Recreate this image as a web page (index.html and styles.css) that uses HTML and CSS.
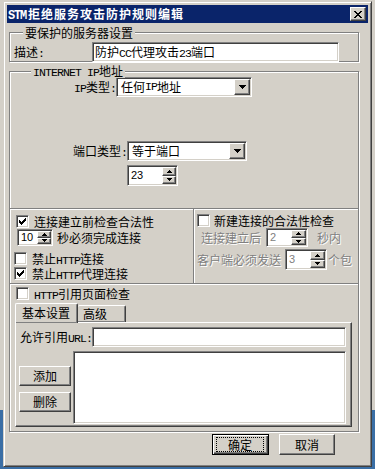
FILE: index.html
```html
<!DOCTYPE html>
<html>
<head>
<meta charset="utf-8">
<title>STM拒绝服务攻击防护规则编辑</title>
<link rel="stylesheet" href="styles.css">
</head>
<body>
<div class="dlg">
  <div class="title">
    <span class="ttext"><span class="tm">STM</span>拒绝服务攻击防护规则编辑</span>
    <span class="close"><svg width="8" height="7" viewBox="0 0 8 7" shape-rendering="crispEdges"><path d="M0 0h2v1h-2zM6 0h2v1h-2zM1 1h2v1h-2zM5 1h2v1h-2zM2 2h4v1h-4zM3 3h2v1h-2zM2 4h4v1h-4zM1 5h2v1h-2zM5 5h2v1h-2zM0 6h2v1h-2zM6 6h2v1h-2z"/></svg></span>
  </div>
  <div class="client">
    <div class="frame fa">
      <div class="legend la">要保护的服务器设置</div>
      <div class="ra">
        <span class="lbl-desc">描述<span class="m">:</span></span>
        <div class="field desc">防护<span class="m">CC</span>代理攻击<span class="m">23</span>端口</div>
      </div>
    </div>

    <div class="frame fb">
      <div class="legend lb"><span class="m">INTERNET IP</span>地址</div>
      <div class="r-ip">
        <span class="rl rl-ip"><span class="m">IP</span>类型<span class="m">:</span></span>
        <div class="combo combo-ip">
          <span class="ctext">任何<span class="m">IP</span>地址</span>
          <span class="drop"><svg width="7" height="4" viewBox="0 0 7 4" shape-rendering="crispEdges"><path d="M0 0h7v1h-1v1h-1v1h-1v1h-1v-1h-1v-1h-1v-1h-1z"/></svg></span>
        </div>
      </div>
      <div class="r-port">
        <span class="rl rl-port">端口类型<span class="m">:</span></span>
        <div class="combo combo-port">
          <span class="ctext">等于端口</span>
          <span class="drop"><svg width="7" height="4" viewBox="0 0 7 4" shape-rendering="crispEdges"><path d="M0 0h7v1h-1v1h-1v1h-1v1h-1v-1h-1v-1h-1v-1h-1z"/></svg></span>
        </div>
      </div>
      <div class="spin spin-port">
        <span class="v">23</span>
        <span class="arr">
          <span class="ab"><svg width="5" height="3" viewBox="0 0 5 3" shape-rendering="crispEdges"><path d="M2 0h1v1h1v1h1v1h-5v-1h1v-1h1z"/></svg></span>
          <span class="ab"><svg width="5" height="3" viewBox="0 0 5 3" shape-rendering="crispEdges"><path d="M0 0h5v1h-1v1h-1v1h-1v-1h-1v-1h-1z"/></svg></span>
        </span>
      </div>
    </div>

    <div class="crow">
      <div class="frame fcl">
        <div class="chk c1">
          <span class="cb"><svg width="7" height="7" viewBox="0 0 7 7" shape-rendering="crispEdges"><path d="M6 0h1v1h-1zM5 1h2v1h-2zM0 2h1v1h-1zM4 2h3v1h-3zM0 3h2v1h-2zM3 3h3v1h-3zM0 4h5v1h-5zM1 5h3v1h-3zM2 6h1v1h-1z"/></svg></span>
          <span class="ct">连接建立前检查合法性</span>
        </div>
        <div class="srow s1">
          <div class="spin spin-10">
            <span class="v">10</span>
            <span class="arr">
              <span class="ab"><svg width="5" height="3" viewBox="0 0 5 3" shape-rendering="crispEdges"><path d="M2 0h1v1h1v1h1v1h-5v-1h1v-1h1z"/></svg></span>
              <span class="ab"><svg width="5" height="3" viewBox="0 0 5 3" shape-rendering="crispEdges"><path d="M0 0h5v1h-1v1h-1v1h-1v-1h-1v-1h-1z"/></svg></span>
            </span>
          </div>
          <span>秒必须完成连接</span>
        </div>
        <div class="chk c2">
          <span class="cb"></span>
          <span class="ct">禁止<span class="m">HTTP</span>连接</span>
        </div>
        <div class="chk c3">
          <span class="cb"><svg width="7" height="7" viewBox="0 0 7 7" shape-rendering="crispEdges"><path d="M6 0h1v1h-1zM5 1h2v1h-2zM0 2h1v1h-1zM4 2h3v1h-3zM0 3h2v1h-2zM3 3h3v1h-3zM0 4h5v1h-5zM1 5h3v1h-3zM2 6h1v1h-1z"/></svg></span>
          <span class="ct">禁止<span class="m">HTTP</span>代理连接</span>
        </div>
      </div>
      <div class="frame fcr">
        <div class="chk r1">
          <span class="cb"></span>
          <span class="ct">新建连接的合法性检查</span>
        </div>
        <div class="srow r2">
          <span class="dis">连接建立后</span>
          <div class="spin spin-2">
            <span class="v dv">2</span>
            <span class="arr">
              <span class="ab"><svg width="5" height="3" viewBox="0 0 5 3" shape-rendering="crispEdges"><path d="M2 0h1v1h1v1h1v1h-5v-1h1v-1h1z"/></svg></span>
              <span class="ab"><svg width="5" height="3" viewBox="0 0 5 3" shape-rendering="crispEdges"><path d="M0 0h5v1h-1v1h-1v1h-1v-1h-1v-1h-1z"/></svg></span>
            </span>
          </div>
          <span class="dis after2">秒内</span>
        </div>
        <div class="srow r3">
          <span class="dis">客户端必须发送</span>
          <div class="spin spin-3">
            <span class="v dv">3</span>
            <span class="arr">
              <span class="ab"><svg width="5" height="3" viewBox="0 0 5 3" shape-rendering="crispEdges"><path d="M2 0h1v1h1v1h1v1h-5v-1h1v-1h1z"/></svg></span>
              <span class="ab"><svg width="5" height="3" viewBox="0 0 5 3" shape-rendering="crispEdges"><path d="M0 0h5v1h-1v1h-1v1h-1v-1h-1v-1h-1z"/></svg></span>
            </span>
          </div>
          <span class="dis after3">个包</span>
        </div>
      </div>
    </div>

    <div class="frame fd">
      <div class="chk d1">
        <span class="cb"></span>
        <span class="ct"><span class="m">HTTP</span>引用页面检查</span>
      </div>
      <div class="tabs">
        <span class="tab tab-on">基本设置</span>
        <span class="tab tab-off">高级</span>
      </div>
      <div class="pane">
        <div class="urow">
          <span class="ulbl">允许引用<span class="m">URL:</span></span>
          <div class="field url"></div>
        </div>
        <div class="prow">
          <div class="bcol">
            <span class="btn sb b-add">添加</span>
            <span class="btn sb b-del">删除</span>
          </div>
          <div class="field list"></div>
        </div>
      </div>
    </div>

    <div class="btns">
      <span class="btn def ok"><span class="focus">确定</span></span>
      <span class="btn cancel">取消</span>
    </div>
  </div>
</div>
</body>
</html>
```
FILE: styles.css
```css
* { box-sizing: border-box; }
html, body { margin: 0; padding: 0; }
body {
  width: 375px;
  height: 469px;
  overflow: hidden;
  background: linear-gradient(#d4d0c8 0, #d4d0c8 410px, #3a6ea5 410px);
  font: 12px/14px "Noto Sans CJK SC", sans-serif;
  color: #000;
}
.m {
  font-family: "Liberation Mono", monospace;
  font-size: 11.5px;
  letter-spacing: -0.9px;
  line-height: 10px;
}

.dlg {
  margin: 1px 0 0 3px;
  width: 369px;
  height: 466px;
  background: #d4d0c8;
  border: 1px solid;
  border-color: #d4d0c8 #404040 #404040 #d4d0c8;
  box-shadow: inset 1px 1px 0 #fff, inset -1px -1px 0 #808080;
  padding: 3px;
  display: flex;
  flex-direction: column;
}
.title {
  height: 18px;
  flex: none;
  background: #0a246a;
  color: #fff;
  font-weight: bold;
  display: flex;
  align-items: center;
  justify-content: space-between;
  padding: 0 2px 0 1px;
}
.ttext { letter-spacing: 1px; white-space: nowrap; }
.tm {
  font: bold 12px/10px "Liberation Mono", monospace;
  letter-spacing: -1.2px;
  margin-right: 2px;
}
.close {
  width: 16px; height: 14px;
  background: #d4d0c8;
  border: 1px solid;
  border-color: #fff #404040 #404040 #fff;
  box-shadow: inset -1px -1px 0 #808080;
  display: flex; align-items: center; justify-content: center;
}

.client { padding-left: 2px; }

.frame {
  position: relative;
  width: 350px;
  border: 1px solid #808080;
  box-shadow: 1px 1px 0 #fff, inset 1px 1px 0 #fff;
}
.legend {
  position: absolute;
  background: #d4d0c8;
  padding: 0 2px;
  line-height: 14px;
  white-space: nowrap;
}
.fa { margin-top: 9px; height: 30px; }
.la { top: -7px; left: 13px; }
.ra { display: flex; align-items: center; margin-top: 9px; padding-left: 4px; height: 20px; }
.lbl-desc { width: 78px; }

.field {
  background: #fff;
  border: 1px solid;
  border-color: #808080 #fff #fff #808080;
  box-shadow: inset 1px 1px 0 #404040, inset -1px -1px 0 #d4d0c8;
}
.desc { width: 247px; height: 20px; padding: 2px 0 0 2px; white-space: nowrap; }

.fb { margin-top: 9px; height: 138px; }
.lb { top: -8px; left: 21px; }
.r-ip, .r-port { display: flex; align-items: center; height: 20px; }
.r-ip { margin-top: 5px; }
.r-port { margin-top: 44px; }
.rl { text-align: right; white-space: nowrap; }
.rl-ip { width: 106px; }
.rl-port { width: 117px; }

.combo {
  height: 20px;
  display: flex;
  align-items: stretch;
  background: #fff;
  border: 1px solid;
  border-color: #808080 #fff #fff #808080;
  box-shadow: inset 1px 1px 0 #404040, inset -1px -1px 0 #d4d0c8;
  padding: 1px;
}
.combo-ip { width: 136px; }
.combo-port { width: 120px; }
.ctext { flex: 1; padding-left: 3px; display: flex; align-items: center; white-space: nowrap; }
.drop, .ab, .btn, .tab {
  background: #d4d0c8;
  border: 1px solid;
  border-color: #fff #404040 #404040 #fff;
  box-shadow: inset -1px -1px 0 #808080;
}
.drop { width: 16px; display: flex; align-items: center; justify-content: center; }

.spin {
  display: flex;
  background: #fff;
  border: 1px solid;
  border-color: #808080 #fff #fff #808080;
  box-shadow: inset 1px 1px 0 #404040, inset -1px -1px 0 #d4d0c8;
  padding: 1px;
}
.spin .v {
  flex: 1;
  padding-left: 2px;
  font: 11px/13px "Liberation Sans", sans-serif;
  display: flex; align-items: center;
}
.spin .dv { color: #808080; }
.arr { width: 14px; display: flex; flex-direction: column; }
.ab { flex: 1; display: flex; align-items: center; justify-content: center; }
.spin-port { width: 51px; height: 21px; margin: 4px 0 0 117px; }
.spin-10 { width: 36px; height: 17px; }
.spin-2 { width: 42px; height: 19px; margin-left: 5px; }
.spin-3 { width: 42px; height: 21px; margin-left: 4px; }
.spin-2 .arr, .spin-3 .arr { width: 15px; }

.crow { display: flex; margin-top: -1px; }
.fcl { width: 185px; height: 76px; }
.fcr { width: 166px; height: 76px; margin-left: -1px; }

.chk { display: flex; align-items: center; height: 13px; gap: 5px; white-space: nowrap; }
.ct { line-height: 13px; height: 13px; display: block; }
.cb {
  width: 13px; height: 13px; flex: none;
  background: #fff;
  border: 1px solid;
  border-color: #808080 #fff #fff #808080;
  box-shadow: inset 1px 1px 0 #404040, inset -1px -1px 0 #d4d0c8;
  display: flex; align-items: center; justify-content: center;
}
.c1 { margin: 6px 0 0 6px; }
.srow { display: flex; align-items: center; white-space: nowrap; }
.s1 { margin: 1px 0 0 7px; gap: 4px; }
.c2 { margin: 6px 0 0 4px; }
.c3 { margin: 2px 0 0 4px; }

.r1 { margin: 5px 0 0 3px; gap: 4px; }
.r2 { margin: 1px 0 0 7px; }
.r3 { margin: 2px 0 0 3px; }
.dis { color: #808080; text-shadow: 1px 1px 0 #fff; }
.after2 { margin-left: 9px; }
.after3 { margin-left: 1px; }

.fd { margin-top: -1px; height: 149px; }
.d1 { margin: 3px 0 0 6px; }
.tabs {
  position: relative;
  z-index: 1;
  display: flex;
  align-items: flex-end;
  height: 19px;
  margin: 3px 0 0 5px;
}
.tab {
  display: flex; align-items: center;
  border-bottom: none;
  border-radius: 2px 2px 0 0;
  white-space: nowrap;
}
.tab-on { width: 63px; height: 20px; margin-bottom: -1px; padding: 0 0 1px 6px; }
.tab-off { width: 48px; height: 17px; border-left: none; padding: 0 0 0 5px; }
.pane {
  width: 337px;
  height: 105px;
  margin-left: 5px;
  border: 1px solid;
  border-color: #fff #404040 #404040 #fff;
  box-shadow: inset -1px -1px 0 #808080;
}
.urow { display: flex; align-items: center; margin: 4px 0 0 4px; height: 20px; }
.ulbl { width: 72px; white-space: nowrap; }
.url { width: 254px; height: 20px; }
.prow { display: flex; margin-top: 4px; }
.bcol { display: flex; flex-direction: column; width: 52px; margin-left: 3px; }
.sb { width: 52px; height: 20px; }
.b-add { margin-top: 15px; }
.b-del { margin-top: 6px; }
.list { width: 273px; height: 73px; margin-left: 2px; }

.btn { display: flex; align-items: center; justify-content: center; }
.btns { display: flex; gap: 10px; margin-top: 2px; padding-left: 203px; }
.ok, .cancel { height: 21px; }
.ok { width: 57px; }
.cancel { width: 56px; }
.def {
  border: 1px solid #000;
  box-shadow: inset 1px 1px 0 #fff, inset -1px -1px 0 #404040, inset -2px -2px 0 #808080;
  padding: 2px 4px 2px 3px;
}
.focus {
  flex: 1;
  align-self: stretch;
  border: 1px dotted #000;
  display: flex; align-items: center; justify-content: center;
}
```
